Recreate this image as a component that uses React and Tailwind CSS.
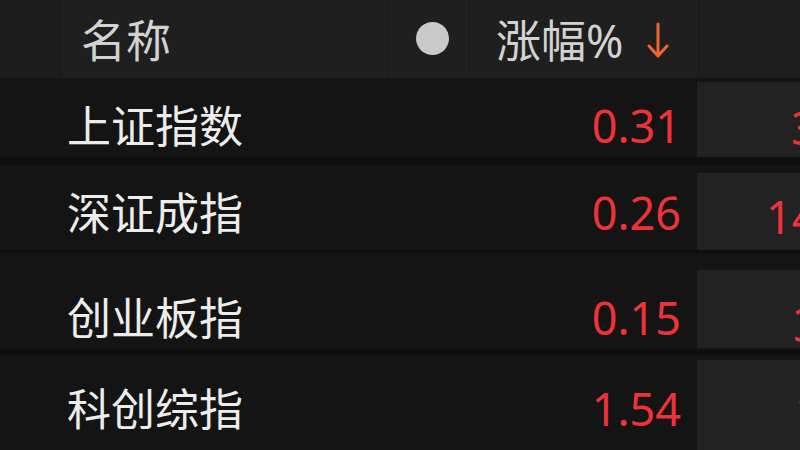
import React from "react";

const font = { fontFamily: "'Noto Sans', 'Noto Sans CJK SC', sans-serif" };

const rows = [
  { name: "上证指数", pct: "0.31", price: "3371.92", h: "h-[80px]", pt: "pt-[16px]", sep: "h-[7px]", boxTop: "mt-[4px]", boxH: "h-[75px]", pl: "pl-[94px]" },
  { name: "深证成指", pct: "0.26", price: "14021.80", h: "h-[85px]", pt: "pt-[10px]", sep: "h-[3px]", boxTop: "mt-[8px]", boxH: "h-[77px]", pl: "pl-[69px]" },
  { name: "创业板指", pct: "0.15", price: "3026.37", h: "h-[97px]", pt: "pt-[32px]", sep: "h-[5px]", boxTop: "mt-[17px]", boxH: "h-[78px]", pl: "pl-[96px]" },
  { name: "科创综指", pct: "1.54", price: "1165.08", h: "h-[95px]", pt: "pt-[12px]", sep: "h-0", boxTop: "mt-[5px]", boxH: "h-[90px]", pl: "pl-[98px]" },
];

function DownArrow() {
  return (
    <svg width="22" height="40" viewBox="0 0 22 40" className="ml-[24px]">
      <path d="M11 3 V35 M2 25 L11 35 L20 25" fill="none" stroke="#f0642e" strokeWidth="3" strokeLinecap="round" strokeLinejoin="round" />
    </svg>
  );
}

export default function App() {
  return (
    <div className="w-[800px] h-[450px] overflow-hidden bg-[#141414]" style={font}>
      {/* header */}
      <div className="flex h-[78px] bg-[#1f1f1f]">
        <div className="w-[62px] shrink-0 bg-[#1c1c1c] border-r border-[#191919]" />
        <div className="w-[326px] shrink-0 flex items-center pl-[19px] pt-[4px] text-[45px] text-[#d2d2d2] border-r border-[#191919]">名称</div>
        <div className="w-[82px] shrink-0 flex items-center justify-center pl-[8px] border-r border-[#191919]">
          <div className="w-[33px] h-[33px] rounded-full bg-[#c9c9c9] -mt-[2px]" />
        </div>
        <div className="w-[229px] shrink-0 flex items-center pl-[26px] pt-[4px] text-[45px] text-[#d2d2d2] border-r border-[#191919]">
          涨幅%
          <DownArrow />
        </div>
        <div className="flex-1 bg-[#1e1e1e]" />
      </div>

      {rows.map((r) => (
        <div key={r.name}>
          <div className={`flex ${r.h}`}>
            <div className={`w-[697px] shrink-0 flex items-center justify-between pl-[67px] pr-[16px] ${r.pt}`}>
              <span className="text-[44px] text-[#ececec]">{r.name}</span>
              <span className="text-[45px] text-[#ee3338]">{r.pct}</span>
            </div>
            <div className="flex-1 min-w-0 flex flex-col">
              <div className={`${r.boxTop} ${r.boxH} bg-[#222222] flex items-center ${r.pl} ${r.pt} text-[45px] text-[#ee3338] whitespace-nowrap overflow-hidden`}>
                {r.price}
              </div>
            </div>
          </div>
          <div className={`${r.sep} bg-[#0e0e0e]`} />
        </div>
      ))}
    </div>
  );
}
